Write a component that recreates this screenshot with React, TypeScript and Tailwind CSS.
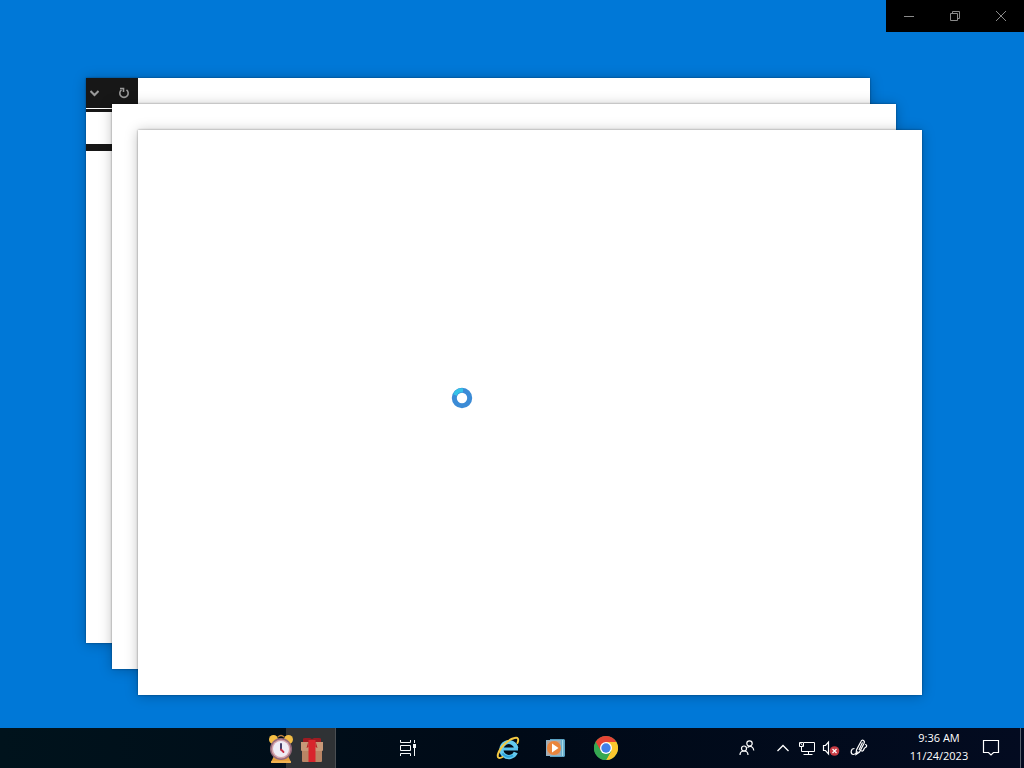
import type { ReactNode } from "react";

const windowClassName =
  "absolute h-[565px] w-[784px] bg-white shadow-[0_1px_12px_rgba(0,0,0,0.25),0_0_2px_rgba(0,0,0,0.4)]";
const trayButtonClassName =
  "flex h-10 w-6 items-center justify-center hover:bg-white/10";
const appButtonClassName =
  "flex h-10 shrink-0 items-center justify-center hover:bg-white/10";

function CaptionButton({ label, children }: { label: string; children: ReactNode }) {
  return (
    <button
      type="button"
      aria-label={label}
      className="flex h-8 w-[46px] items-center justify-center bg-black text-[#8a8a8a] hover:bg-[#222222]"
    >
      <svg className="h-3 w-3" viewBox="0 0 12 12" fill="none" stroke="currentColor" aria-hidden="true">
        {children}
      </svg>
    </button>
  );
}

function AlarmClockIcon() {
  return (
    <svg width="26" height="30" viewBox="0 0 26 30" aria-hidden="true">
      <path d="M6 22h14l3 6q0 1-1 1H4q-1 0-1-1z" fill="#e9a23d" />
      <path d="M3 28h20" stroke="#f4b95b" strokeWidth="1.500" />
      <circle cx="5.500" cy="5.500" r="4.500" fill="#f3bd45" />
      <circle cx="20.500" cy="5.500" r="4.500" fill="#f3bd45" />
      <path d="M10 3q3-3 6 0" fill="none" stroke="#b97d3d" strokeWidth="1.500" />
      <circle cx="13" cy="15" r="11" fill="#94697a" />
      <circle cx="13" cy="15" r="9.500" fill="#d5a4ab" />
      <circle cx="13" cy="15" r="8" fill="#efedf6" />
      <path d="M13 10v5.500" stroke="#302b59" strokeWidth="1.800" strokeLinecap="round" />
      <path d="M13 15.500l2.500 2.500" stroke="#c92f45" strokeWidth="1.800" strokeLinecap="round" />
    </svg>
  );
}

function GiftIcon() {
  return (
    <svg width="24" height="26" viewBox="0 0 24 26" aria-hidden="true">
      <path d="M2 9h20v15q0 1-1 1H3q-1 0-1-1z" fill="#b98565" />
      <path d="M1 5h22v8q0 1-1 1H2q-1 0-1-1z" fill="#c79878" />
      <path d="M3 5V2q0-1 2-1h5l2 1 2-1h5q2 0 2 1v3z" fill="#9d1c22" />
      <path d="M8.500 3h7v22h-7z" fill="#d8242c" />
      <path d="M8.500 4L6.500 11l2-1M15.500 4l2 7-2-1" fill="#b92127" />
    </svg>
  );
}

function TaskViewIcon() {
  return (
    <svg width="18" height="16" viewBox="0 0 18 16" fill="none" stroke="#f4f7f8" aria-hidden="true">
      <path d="M1.500 0v2.500h10V0M1.500 16v-2.500h10V16M1.500 5.500h10v5h-10zM15.500 0v3M15.500 8v8" />
      <path d="M14 4h3v4h-3z" fill="#f4f7f8" stroke="none" />
    </svg>
  );
}

function ExplorerIcon() {
  return (
    <svg width="24" height="24" viewBox="0 0 24 24" fill="none" aria-hidden="true">
      <path d="M19.800 16.500a7.500 7.500 0 1 1 .5-4.200" stroke="#64caf0" strokeWidth="4.200" />
      <path d="M7 13h15" stroke="#58c0ec" strokeWidth="3" />
      <path d="M6.500 17.500a7.600 7.600 0 0 0 10.500 2" stroke="#2ba3dc" strokeWidth="2" />
      <path
        d="M21.500 7c1.500-4 .5-6-3-5C12 3.500 4 11 2 18c-1 4 1 5 4.500 3"
        stroke="#f3c944"
        strokeWidth="2"
        strokeLinecap="round"
      />
    </svg>
  );
}

function MediaPlayerIcon() {
  return (
    <svg width="22" height="20" viewBox="0 0 22 20" aria-hidden="true">
      <path d="M5 1h14l1 1v16l-1 1H5z" fill="#5ba3c5" />
      <path d="M17.500 2v16" stroke="#a7dbe9" strokeWidth="1.500" />
      <path d="M1 2h15v16H1z" fill="#8fb2c7" />
      <path d="M2 3h13v14H2z" fill="#b9a69c" />
      <circle cx="9" cy="10" r="7" fill="#e9853d" />
      <path d="M7 5.500v9l6.500-4.500z" fill="#ffffff" />
    </svg>
  );
}

function ChromeIcon() {
  return (
    <svg width="24" height="24" viewBox="0 0 24 24" aria-hidden="true">
      <circle cx="12" cy="12" r="12" fill="#36a852" />
      <path d="M1.600 6A12 12 0 0 1 22.400 6L12 12z" fill="#e44435" />
      <path d="M1.600 6L6.800 15l3-5L12 6.500H5z" fill="#e44435" />
      <path d="M22.400 6A12 12 0 0 1 12 24l5.200-9L12 6z" fill="#fbc72e" />
      <path d="M1.600 6L6.800 15 12 18l5.200-3L12 24A12 12 0 0 1 1.600 6z" fill="#36a852" />
      <circle cx="12" cy="12" r="6" fill="#ffffff" />
      <circle cx="12" cy="12" r="4.700" fill="#4080e9" />
    </svg>
  );
}

function StackedWindows() {
  return (
    <>
      <section aria-label="Browser window" className={`${windowClassName} left-[86px] top-[78px]`}>
        <div className="flex h-[30px] w-[52px] items-center justify-between bg-[#171717] pl-1 pr-2 text-[#9a9a9a]">
          <button type="button" aria-label="Show history">
            <svg width="9" height="8" viewBox="0 0 9 8" fill="none" stroke="currentColor" strokeWidth="2" aria-hidden="true">
              <path d="M.5 2l4 4 4-4" />
            </svg>
          </button>
          <button type="button" aria-label="Refresh">
            <svg width="12" height="12" viewBox="0 0 12 12" fill="none" stroke="currentColor" strokeWidth="1.600" aria-hidden="true">
              <path d="M8.500 2.800a4.200 4.200 0 1 1-5 0M2 1.500h3.500V5" />
            </svg>
          </button>
        </div>
        <div className="mt-px h-[3px] w-[52px] bg-[#171717]" />
        <div className="mt-8 h-[7px] w-[52px] bg-[#171717]" />
      </section>
      <section aria-label="Second window" className={`${windowClassName} left-[112px] top-[104px]`} />
      <section
        aria-label="Loading window"
        className={`${windowClassName} left-[138px] top-[130px]`}
      />
      <svg
        className="absolute left-[451px] top-[387px]"
        width="22"
        height="22"
        viewBox="0 0 22 22"
        fill="none"
        role="img"
        aria-label="Busy"
      >
        <circle cx="11" cy="11" r="7.700" stroke="#3b8bd6" strokeWidth="5" />
        <path d="M4 8a7.700 7.700 0 0 1 8-4.600" stroke="#35c3e8" strokeWidth="4" />
      </svg>
    </>
  );
}

function Taskbar() {
  return (
    <footer className="flex h-10 items-center justify-between bg-linear-to-r from-[#00131c] via-[#000a17] to-[#030b20] text-white">
      <nav aria-label="Apps" className="flex pl-64">
        <button type="button" aria-label="Alarm clock" className={`${appButtonClassName} z-10 w-[50px] pt-0.5`}>
          <AlarmClockIcon />
        </button>
        <button
          type="button"
          aria-label="Gift"
          className="-ml-5 flex h-10 w-[50px] shrink-0 items-center justify-center border-r border-[#4a4e52] bg-[#2f3235] pl-0.5 pt-1"
        >
          <GiftIcon />
        </button>
        <button type="button" aria-label="Task View" className={`${appButtonClassName} ml-12 w-12`}>
          <TaskViewIcon />
        </button>
        <button type="button" aria-label="Internet Explorer" className={`${appButtonClassName} ml-[52px] w-12`}>
          <ExplorerIcon />
        </button>
        <button type="button" aria-label="Media Player" className={`${appButtonClassName} w-12`}>
          <MediaPlayerIcon />
        </button>
        <button type="button" aria-label="Chrome" className={`${appButtonClassName} w-[52px]`}>
          <ChromeIcon />
        </button>
      </nav>

      <div className="flex items-center">
        <button type="button" aria-label="People" className={`${trayButtonClassName} mr-3`}>
          <svg width="16" height="16" viewBox="0 0 16 16" fill="none" stroke="currentColor" strokeWidth="1.200" aria-hidden="true">
            <circle cx="5" cy="8.500" r="2.500" />
            <path d="M1 15c0-2.500 1.500-4 4-4s4 1.500 4 4" />
            <circle cx="10.500" cy="3.500" r="2.700" />
            <path d="M8.500 7.500c3-2.500 6-.5 6.300 3" />
          </svg>
        </button>
        <button type="button" aria-label="Show hidden icons" className={trayButtonClassName}>
          <svg width="14" height="8" viewBox="0 0 14 8" fill="none" stroke="currentColor" strokeWidth="1.300" aria-hidden="true">
            <path d="M1.500 7L7 1.500 12.500 7" />
          </svg>
        </button>
        <button type="button" aria-label="Network" className={trayButtonClassName}>
          <svg width="18" height="16" viewBox="0 0 18 16" fill="none" stroke="currentColor" aria-hidden="true">
            <path d="M6 2.500h10.500v9h-13V7M1.500 2.500h4v4h-4zM3.500 6.500v4M10.500 11.500v3M5.500 14.500h9" />
            <path d="M2.500 3l2 2.500" />
          </svg>
        </button>
        <button type="button" aria-label="Speakers muted" className={trayButtonClassName}>
          <svg width="18" height="16" viewBox="0 0 18 16" fill="none" aria-hidden="true">
            <path d="M1.500 5.500h2L6.500 2v12l-3-3.500h-2z" stroke="currentColor" strokeWidth="1.200" />
            <circle cx="12.500" cy="11" r="4.800" fill="#c73b43" />
            <path d="M10.500 9l4 4M14.500 9l-4 4" stroke="#ffffff" strokeWidth="1.200" />
          </svg>
        </button>
        <button type="button" aria-label="Ink workspace" className={`${trayButtonClassName} ml-1`}>
          <svg width="18" height="18" viewBox="0 0 18 18" fill="none" stroke="currentColor" strokeWidth="1.200" aria-hidden="true">
            <path d="M6 15.500l.5-4.500L11 2.500q1-2 2.500-1t.5 3L9.500 13z" />
            <path d="M9 11l3.500-7.500M4.500 9.500C.5 9.500 0 15 3.500 15.500c2 0 3.500-1.500 4.500-3M10.500 11c1.500 2 3 1 3.500-1s2-1 2.500-2.500-.5-2-1.500-2" />
          </svg>
        </button>
        <button
          type="button"
          className="ml-[33px] flex h-10 w-[70px] flex-col items-center justify-center whitespace-nowrap pb-0.5 text-[11px] leading-[18px] hover:bg-white/10"
        >
          <time dateTime="09:36">9:36 AM</time>
          <time dateTime="2023-11-24">11/24/2023</time>
        </button>
        <button
          type="button"
          aria-label="Notifications"
          className="mr-3 flex h-10 w-[34px] items-center justify-center hover:bg-white/10"
        >
          <svg width="18" height="18" viewBox="0 0 18 18" fill="none" stroke="currentColor" strokeWidth="1.200" aria-hidden="true">
            <path d="M1.500 1.500h15v12h-5L9 16l-2.500-2.500h-5z" />
          </svg>
        </button>
        <button
          type="button"
          aria-label="Show desktop"
          className="h-10 w-1 border-l border-[#59616d] hover:bg-white/10"
        />
      </div>
    </footer>
  );
}

export default function App() {
  return (
    <div className="flex min-h-screen flex-col bg-[#0078d7] font-['Open_Sans','Noto_Sans',sans-serif]">
      <main className="relative flex-1">
        <StackedWindows />
        <div className="flex justify-end">
          <CaptionButton label="Minimize">
            <path d="M1 6.500h10" />
          </CaptionButton>
          <CaptionButton label="Restore">
            <path d="M1.500 3.500h7v7h-7zM3.500 3.500v-2h7v7h-2" />
          </CaptionButton>
          <CaptionButton label="Close">
            <path d="M1 1l10 10M11 1L1 11" />
          </CaptionButton>
        </div>
      </main>
      <Taskbar />
    </div>
  );
}
